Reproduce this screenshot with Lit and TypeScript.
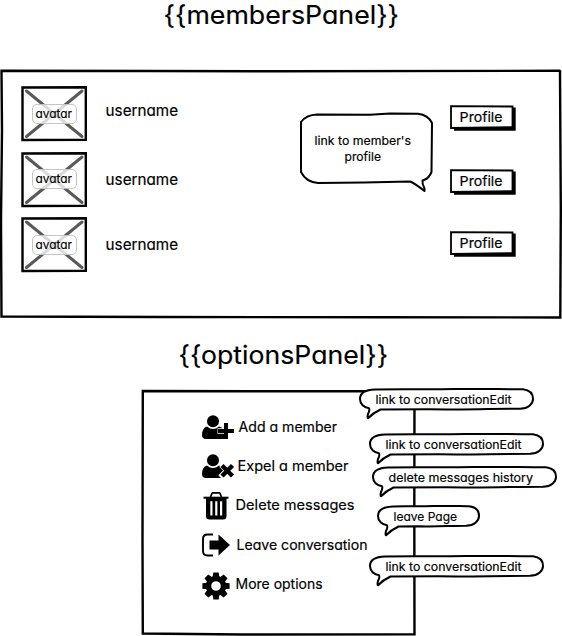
import { LitElement, html, svg, css } from "lit";
import { customElement } from "lit/decorators.js";

// A line of text fitted to an exact width, baseline given inside its box.
const label = (t: string, w: number, size: number, h: number, base: number) => html`
  <svg class="label" width=${w} height=${h}>
    <text x="-0.4" y=${base} font-size=${size} textLength=${w + 0.4} lengthAdjust="spacingAndGlyphs">${t}</text>
  </svg>`;

const labelStyles = css`
  .label { display: block; flex: none; overflow: visible; font-family: Inter, "Liberation Sans", sans-serif;
    font-feature-settings: "cv11"; stroke: #000; stroke-width: .18px; }
`;

const person = svg`
  <circle cx="11" cy="6.300" r="6"/>
  <path d="M5 11.500Q11 16.500 17 11.500L19.500 12.500L22 16V24H4Q0 24 0 20Q0 13 5 11.500Z"/>`;

const icons: Record<string, unknown> = {
  add: svg`${person}
    <path d="M24 7v10M15.500 16h17.500" stroke="#fff" stroke-width="5.600"/>
    <path d="M16 19h6v5h-6z"/>
    <path d="M24 8v16M16 16h16" stroke="#000" stroke-width="4"/>`,
  expel: svg`${person}
    <path d="M19.500 10.500l11 11M31 11l-12.500 12.500" stroke="#fff" stroke-width="6.200"/>
    <path d="M20 11.500l10.500 10.500M30.500 11.500L20 22" stroke="#000" stroke-width="4.400"/>`,
  trash: svg`
    <path d="M1.500 5.700h25" stroke="#000" stroke-width="2"/>
    <path d="M8.500 5l1.500-3.600q.3-.6 1-.6h6q.7 0 1 .6L19.500 5" fill="none" stroke="#000" stroke-width="1.700"/>
    <path fill-rule="evenodd" d="M4 6h20.500v18q0 3.500-3.500 3.500h-13.500q-3.500 0-3.500-3.500zM8.300 9.300v14.200h2.200v-14.200zM13.200 9.300v14.200h2.200v-14.200zM18 9.300v14.200h2.200v-14.200z"/>`,
  leave: svg`
    <path d="M11 1.500H5.500Q1 1.500 1 6v12q0 4.500 4.500 4.500H11" fill="none" stroke="#000" stroke-width="1.900"/>
    <path d="M7.500 7.500h9V1.500L28 12 16.500 22.500V16.500H7.500z"/>`,
  gear: svg`
    <g transform="translate(14 14)">
      ${[0, 45, 90, 135, 180, 225, 270, 315].map((a) => svg`<path transform="rotate(${a})" d="M-3.300-9L-2.700-13.600h5.400L3.300-9z"/>`)}
      <circle r="7.500" fill="none" stroke="#000" stroke-width="5.400"/>
    </g>`,
};

@customElement("sketch-bubble")
class SketchBubble extends LitElement {
  static properties = { w: { type: Number }, text: {}, tw: { type: Number }, tx: { type: Number } };
  declare w: number; declare text: string; declare tw: number; declare tx: number;
  static styles = [labelStyles, css`
    :host { display: block; position: relative; }
    .outline { position: absolute; left: 0; top: 0; overflow: visible; }
    .content { position: relative; display: flex; }
  `];
  render() {
    const w = this.w;
    return html`
      <svg class="outline" width=${w} height="32">
        <path fill="#fff" stroke="#000" stroke-width="2" stroke-linejoin="round"
          d="M1 11 C1 5 7 1.800 16 1.500 C${w * .3} .8 ${w * .35} 1.800 ${w * .55} 1 C${w * .7} .6 ${w * .8} 1.200 ${w - 11} 1.200
          C${w - 4} 2 ${w - 1} 6 ${w - 1} 11 C${w - 1} 16 ${w - 6} 20.500 ${w - 14} 20.800
          C${w * .7} 20.800 ${w * .6} 21.800 ${w * .4} 21.300 L21.500 21.500 Q14 25 9 30.300 Q8 30 9 26 Q11 22 10 20.200 C5 19.500 1 16 1 11Z"/>
      </svg>
      <div class="content" style="padding-left:${this.tx}px">${label(this.text, this.tw, 12.3, 22, 16)}</div>`;
  }
}

@customElement("app-root")
class AppRoot extends LitElement {
  static styles = [labelStyles, css`
    :host { display: block; position: relative; width: 562px; height: 636px; overflow: hidden; background: #fff; color: #000; }
    .heading { display: flex; height: 70px; padding-left: 164px; box-sizing: border-box; }
    .heading.options { height: 72px; padding-left: 179px; padding-top: 22px; }
    .panel { position: relative; box-sizing: border-box; }
    .frame { position: absolute; left: 0; top: 0; overflow: visible; }
    .members { height: 248px; padding: 16px 0 0 21px; }
    .row { position: relative; display: flex; align-items: flex-start; height: 65.500px; }
    .avatar { position: relative; width: 66px; height: 55px; display: grid; place-items: center; margin-right: 19px; }
    .tag { position: relative; display: flex; justify-content: center; box-sizing: border-box; width: 45px; height: 20px; border: 1px solid #c4c4c4; border-radius: 5px; background: rgba(255,255,255,.78); }
    .name { width: 344px; padding-top: 14px; }
    .row.first .name { padding-top: 11px; }
    .profile { position: relative; display: flex; width: 66px; height: 26px; padding-left: 10px; box-sizing: border-box; margin-top: 17px; }
    .row.first .profile { margin-top: 19px; }
    .row.last .profile { margin-top: 13.500px; }
    .profile .label { position: relative; }
    .panel.choices { width: 274px; height: 246px; margin-left: 142px; padding: 25px 0 0 60px; }
    .choice { position: relative; display: flex; height: 39.500px; }
    .icon { flex: none; overflow: visible; }
    .icon.expel { margin-top: -.5px; }
    .icon.trash { margin-top: -2px; }
    .icon.gear { margin-top: -1.500px; }
    .icon.leave { margin-top: -1px; }
    .callout { position: absolute; }
    .c0 { left: 359px; top: 387.800px; } .c1 { left: 369px; top: 432.800px; }
    .c2 { left: 372px; top: 465.500px; } .c3 { left: 377px; top: 505.300px; } .c4 { left: 369px; top: 554.800px; }
    .speech { position: absolute; left: 299.800px; top: 112px; width: 133px; height: 80px; display: flex; flex-direction: column; align-items: center; padding: 21px 6px 0 0; box-sizing: border-box; }
    .speech .label { position: relative; }
  `];
  render() {
    const choices: [string, string, number, number, number][] = [
      ["add", "Add a member", 98, 37, 17], ["expel", "Expel a member", 110.5, 36.3, 16.3],
      ["trash", "Delete messages", 118.5, 34.3, 16], ["leave", "Leave conversation", 130.5, 35.3, 16],
      ["gear", "More options", 86.5, 34.3, 16.2]];
    const callouts: [string, number, number, number][] = [
      ["link to conversationEdit", 175, 135.5, 16.5], ["link to conversationEdit", 175, 135.5, 16.5],
      ["delete messages history", 185, 144, 17], ["leave Page", 103, 63, 16.5], ["link to conversationEdit", 175, 135.5, 16.5]];
    return html`
      <div class="heading">${label("{{membersPanel}}", 235, 25.5, 34, 24)}</div>
      <section class="panel members">
        <svg class="frame" width="562" height="248">
          <path d="M1.500 .8L150 1 280 1.300 559.500 .8Q560.500 1 560 2L560.800 140 560.300 247.500 380 247.200 160 247 1.500 246.500 1 150 2 60Z" fill="none" stroke="#000" stroke-width="2.400"/>
        </svg>
        ${["first", "mid", "last"].map((k) => html`
          <div class="row ${k}">
            <div class="avatar">
              <svg class="frame" width="66" height="55">
                <path d="M5.500 5l55.500 45.500M61 5L5.500 50.500" stroke="#595959" stroke-width="3" stroke-linecap="round"/>
                <path d="M1.500 1.500L64.800 1.300V53.800L1.500 54Z" fill="none" stroke="#000" stroke-width="2.400"/>
              </svg>
              <div class="tag">${label("avatar", 36, 12.5, 18, 13.3)}</div>
            </div>
            <div class="name">${label("username", 72, 15.3, 24, 18.7)}</div>
            <div class="profile">
              <svg class="frame" width="66" height="26">
                <path d="M4 22.500L62 21.500V2.500h3.700V25.800H4Z"/>
                <path d="M1 1.200L62.500 1.500V22L1 23Z" fill="#fff" stroke="#000" stroke-width="1.800"/>
              </svg>
              ${label("Profile", 42.5, 13.5, 24, 17)}
            </div>
          </div>`)}
      </section>
      <div class="heading options">${label("{{optionsPanel}}", 209, 25.5, 34, 24)}</div>
      <section class="panel choices">
        <svg class="frame" width="274" height="246">
          <path d="M.8 1L120 1.300 272.500 1.200 272.300 120 272.500 244.200 100 244.500 .8 243.500 .5 150Z" fill="none" stroke="#000" stroke-width="2.400"/>
        </svg>
        ${choices.map(([ic, t, w, tx, base]) => html`
          <div class="choice">
            <svg class="icon ${ic}" width=${tx} height="28">${icons[ic]}</svg>
            ${label(t, w, 13.8, 24, base)}
          </div>`)}
      </section>
      <div class="speech">
        <svg class="frame" width="133" height="80">
          <path fill="#fff" stroke="#000" stroke-width="2" stroke-linejoin="round"
            d="M1 10Q6 3 17 2.500L70 2.800 90 1.500 118 1.800Q128 3 132 11L131.500 60Q129 66 125 67.500L122.500 68.500Q122 72 124.500 76.500V79Q115 71.500 110 69.500L64 70.500 18 71Q6 70 1 60Z"/>
        </svg>
        ${label("link to member's", 96, 12.3, 16, 12)}
        ${label("profile", 36, 12.3, 16, 12)}
      </div>
      ${callouts.map(([t, w, tw, tx], i) => html`<sketch-bubble class="callout c${i}" .w=${w} .text=${t} .tw=${tw} .tx=${tx}></sketch-bubble>`)}
    `;
  }
}
